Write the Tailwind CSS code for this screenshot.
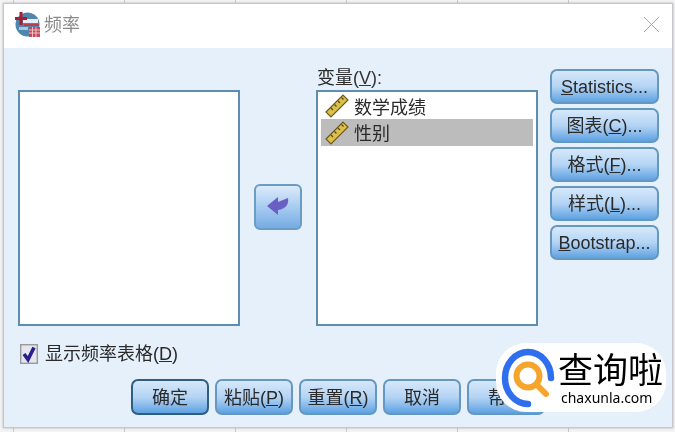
<!DOCTYPE html>
<html lang="zh">
<head>
<meta charset="utf-8">
<script src="https://cdn.jsdelivr.net/npm/@tailwindcss/browser@4"></script>
</head>
<body class="m-0 overflow-hidden bg-[#f3f3f3]">
<div class="relative w-[675px] h-[432px] overflow-hidden blur-[0.35px] p-[3px] pb-[4px] pr-[2px] font-['Liberation_Sans','Noto_Sans_CJK_SC',sans-serif] text-[#2a2a2a] bg-[repeating-linear-gradient(90deg,#f3f3f3_-97px,#f3f3f3_13px,#c8c8c8_13px,#c8c8c8_14px)]">
  <div class="flex flex-col h-full border border-[#c4c8cc] shadow-[0_0_2px_#aaa] bg-[#e5f0fb]">
    <!-- title -->
    <div class="h-[44px] shrink-0 bg-white flex items-center pl-[11px] pr-[12px] pb-[3px] gap-[4px]">
      <svg class="w-[25px] h-[25px] shrink-0" viewBox="0 0 25 25">
        <circle cx="12.500" cy="12.500" r="12" fill="#4f86ad"/>
        <rect x="8" y="7" width="15" height="4" fill="#e6eef5"/>
        <rect x="9" y="12" width="15" height="2" fill="#c23b4a"/>
        <rect x="4" y="15" width="9" height="3" fill="#a9c8dd"/>
        <path d="M6 0v13M0 6.500h12" stroke="#a81c34" stroke-width="3"/>
        <rect x="14" y="15" width="11" height="10" fill="#c9475a"/>
        <path d="M14 18h11M14 21h11M17.500 15v10M21 15v10" stroke="#f2c6cc" stroke-width="0.9"/>
      </svg>
      <span class="text-[18px] leading-none text-[#8a8a8a]">频率</span>
      <svg class="ml-auto w-[17px] h-[17px] shrink-0" viewBox="0 0 17 17"><path d="M1 1l15 15M16 1L1 16" stroke="#a8a8a8" stroke-width="1" fill="none"/></svg>
    </div>
    <!-- body -->
    <div class="flex-1 flex flex-col pl-[14px] pr-[12px] pt-[1px]">
      <div class="flex items-start">
        <div class="w-[222px] h-[236px] mt-[41px] bg-white border-2 border-[#5d8db0] shrink-0"></div>
        <div class="w-[76px] h-[277px] shrink-0 flex items-center justify-center">
          <button class="mt-[38px] w-[48px] h-[46px] rounded-[6px] border-2 border-[#6a9cc4] bg-gradient-to-b from-[#dcebfa] to-[#74ace4] flex items-center justify-center">
            <svg class="w-[22px] h-[19px]" viewBox="0 0 22 19"><path d="M0 9L11 0V5L21 1C22 7 19 12 11 13V18Z" fill="#6a5fc4"/></svg>
          </button>
        </div>
        <div class="w-[222px] shrink-0">
          <div class="h-[41px] flex items-end pb-[1px] text-[18px] leading-[22px] pl-[1px]"><span>变量<span class="text-[#333]">(<span class="underline">V</span>):</span></span></div>
          <div class="h-[236px] bg-white border-2 border-[#5d8db0] pt-[1px] px-[3px] text-[18px]">
            <div class="h-[26px] flex items-center gap-[5px] pl-[4px]">
              <svg class="w-[24px] h-[24px] shrink-0" viewBox="0 0 24 24"><path d="M1 18L18 1l5 5L6 23z" fill="#dcc04a" stroke="#6b5a20" stroke-width="1.200"/><path d="M6 14l2 2M9.500 10.500l2 2M13 7l2 2M16.500 3.500l2 2" stroke="#5a4a18" stroke-width="1.300"/></svg>
              <span class="leading-none pt-[3px]">数学成绩</span>
            </div>
            <div class="h-[27px] flex items-center gap-[5px] pl-[4px] bg-[#bcbcbc]">
              <svg class="w-[24px] h-[24px] shrink-0" viewBox="0 0 24 24"><path d="M1 18L18 1l5 5L6 23z" fill="#dcc04a" stroke="#6b5a20" stroke-width="1.200"/><path d="M6 14l2 2M9.500 10.500l2 2M13 7l2 2M16.500 3.500l2 2" stroke="#5a4a18" stroke-width="1.300"/></svg>
              <span class="leading-none pt-[3px]">性别</span>
            </div>
          </div>
        </div>
        <div class="ml-[12px] mt-[20px] w-[109px] shrink-0 flex flex-col gap-[4px] text-[18px]">
          <button class="h-[35px] pt-[2px] rounded-[7px] border-2 border-[#6498c0] bg-gradient-to-b from-[#d6e8fa] via-[#b4d4f4] to-[#5ea2e2] whitespace-nowrap"><span class="underline">S</span>tatistics...</button>
          <button class="h-[35px] pt-[2px] rounded-[7px] border-2 border-[#6498c0] bg-gradient-to-b from-[#d6e8fa] via-[#b4d4f4] to-[#5ea2e2] whitespace-nowrap">图表(<span class="underline">C</span>)...</button>
          <button class="h-[35px] pt-[2px] rounded-[7px] border-2 border-[#6498c0] bg-gradient-to-b from-[#d6e8fa] via-[#b4d4f4] to-[#5ea2e2] whitespace-nowrap">格式(<span class="underline">F</span>)...</button>
          <button class="h-[35px] pt-[2px] rounded-[7px] border-2 border-[#6498c0] bg-gradient-to-b from-[#d6e8fa] via-[#b4d4f4] to-[#5ea2e2] whitespace-nowrap">样式(<span class="underline">L</span>)...</button>
          <button class="h-[35px] pt-[2px] rounded-[7px] border-2 border-[#6498c0] bg-gradient-to-b from-[#d6e8fa] via-[#b4d4f4] to-[#5ea2e2] whitespace-nowrap"><span class="underline">B</span>ootstrap...</button>
        </div>
      </div>
      <div class="mt-[18px] flex items-center gap-[7px] pl-[2px] text-[18px] h-[20px]">
        <svg class="w-[18px] h-[20px] shrink-0" viewBox="0 0 18 20"><rect x="0.700" y="0.700" width="16.600" height="18.600" fill="#e6e6ee" stroke="#9a9a9a" stroke-width="1.400"/><path d="M4 10l4 5.500 6-12" fill="none" stroke="#2a1f8f" stroke-width="3.600"/></svg>
        <span class="leading-none">显示频率表格(<span class="underline">D</span>)</span>
      </div>
      <div class="mt-[15px] ml-[113px] flex gap-[6px] text-[18px]">
        <button class="w-[78px] h-[36px] pt-[2px] rounded-[7px] border-2 border-[#2f5f80] bg-gradient-to-b from-[#d6e8fa] via-[#b4d4f4] to-[#5ea2e2]">确定</button>
        <button class="w-[78px] h-[36px] pt-[2px] rounded-[7px] border-2 border-[#6498c0] bg-gradient-to-b from-[#d6e8fa] via-[#b4d4f4] to-[#5ea2e2]">粘贴(<span class="underline">P</span>)</button>
        <button class="w-[78px] h-[36px] pt-[2px] rounded-[7px] border-2 border-[#6498c0] bg-gradient-to-b from-[#d6e8fa] via-[#b4d4f4] to-[#5ea2e2]">重置(<span class="underline">R</span>)</button>
        <button class="w-[78px] h-[36px] pt-[2px] rounded-[7px] border-2 border-[#6498c0] bg-gradient-to-b from-[#d6e8fa] via-[#b4d4f4] to-[#5ea2e2]">取消</button>
        <button class="w-[78px] h-[36px] pt-[2px] rounded-[7px] border-2 border-[#6498c0] bg-gradient-to-b from-[#d6e8fa] via-[#b4d4f4] to-[#5ea2e2]">帮助</button>
      </div>
    </div>
  </div>
  <!-- watermark -->
  <div class="absolute left-[496px] top-[343px] w-[170px] h-[69px] bg-white rounded-[30px] flex items-start pl-[5px] pt-[5px] gap-[1px]">
    <svg class="w-[56px] h-[60px] shrink-0" viewBox="0 0 56 60">
      <path d="M50 30A23 26 0 1 0 27 56" fill="none" stroke="#2f6fed" stroke-width="6.500" stroke-linecap="round"/>
      <circle cx="27" cy="28" r="11.500" fill="none" stroke="#f5a52c" stroke-width="6"/>
      <path d="M36 37l9 9" stroke="#f5a52c" stroke-width="6" stroke-linecap="round"/>
    </svg>
    <div class="flex flex-col items-start -mt-[2px]">
      <span class="text-[35px] leading-[44px] text-black font-['Noto_Sans_CJK_SC',sans-serif] whitespace-nowrap">查询啦</span>
      <span class="text-[14px] leading-[16px] pl-[3px] text-black font-['Noto_Sans',sans-serif]">chaxunla.com</span>
    </div>
  </div>
</div>
</body>
</html>
